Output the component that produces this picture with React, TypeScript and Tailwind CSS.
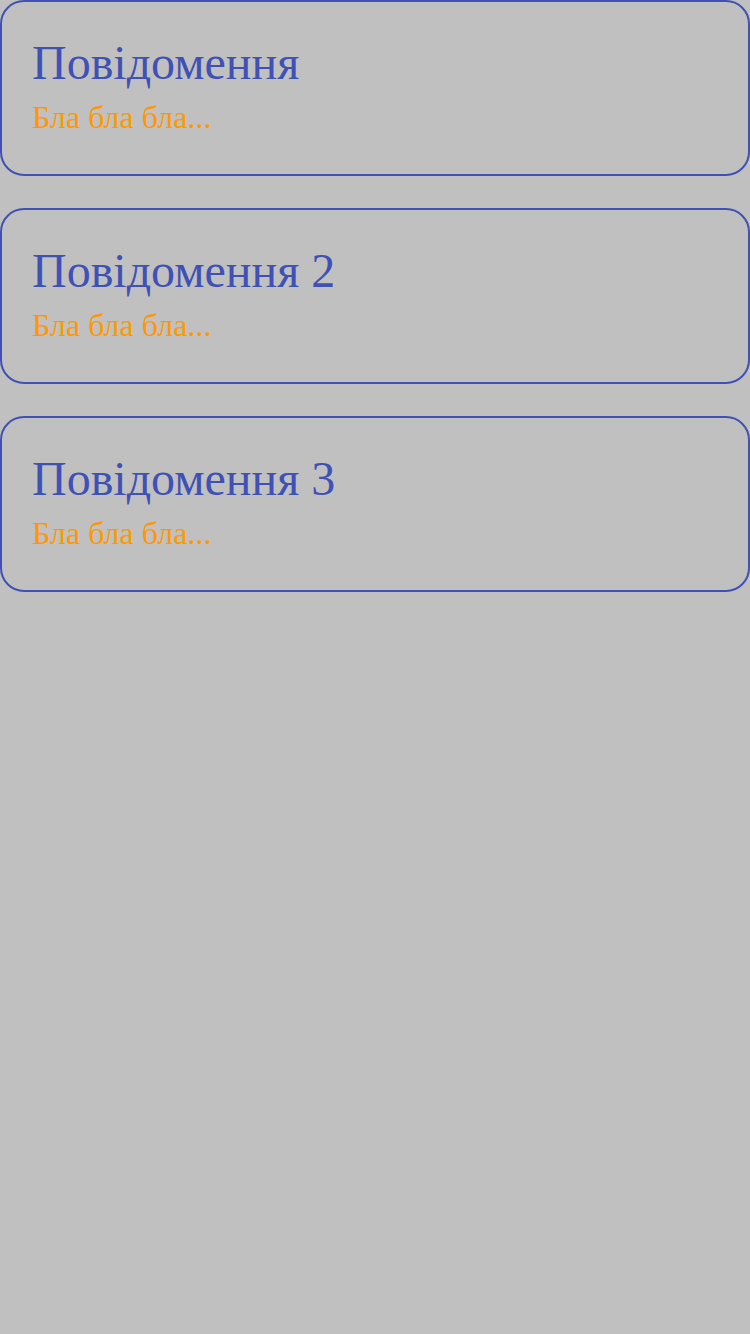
import React from "react";

const messages = [
  { title: "Повідомення", body: "Бла бла бла..." },
  { title: "Повідомення 2", body: "Бла бла бла..." },
  { title: "Повідомення 3", body: "Бла бла бла..." },
];

export default function App() {
  return (
    <div
      className="min-h-[1334px] w-[750px] bg-[#c0c0c0] flex flex-col gap-[32px]"
      style={{ fontFamily: '"Liberation Serif", "DejaVu Serif", serif' }}
    >
      {messages.map((m) => (
        <div
          key={m.title}
          className="h-[176px] border-2 border-[#3f51b5] rounded-[24px] pl-[30px] pt-[33px]"
        >
          <div className="text-[48px] leading-[56px] text-[#3f51b5]">{m.title}</div>
          <div className="mt-[6px] text-[32px] leading-[40px] text-[#ff9800]">{m.body}</div>
        </div>
      ))}
    </div>
  );
}
